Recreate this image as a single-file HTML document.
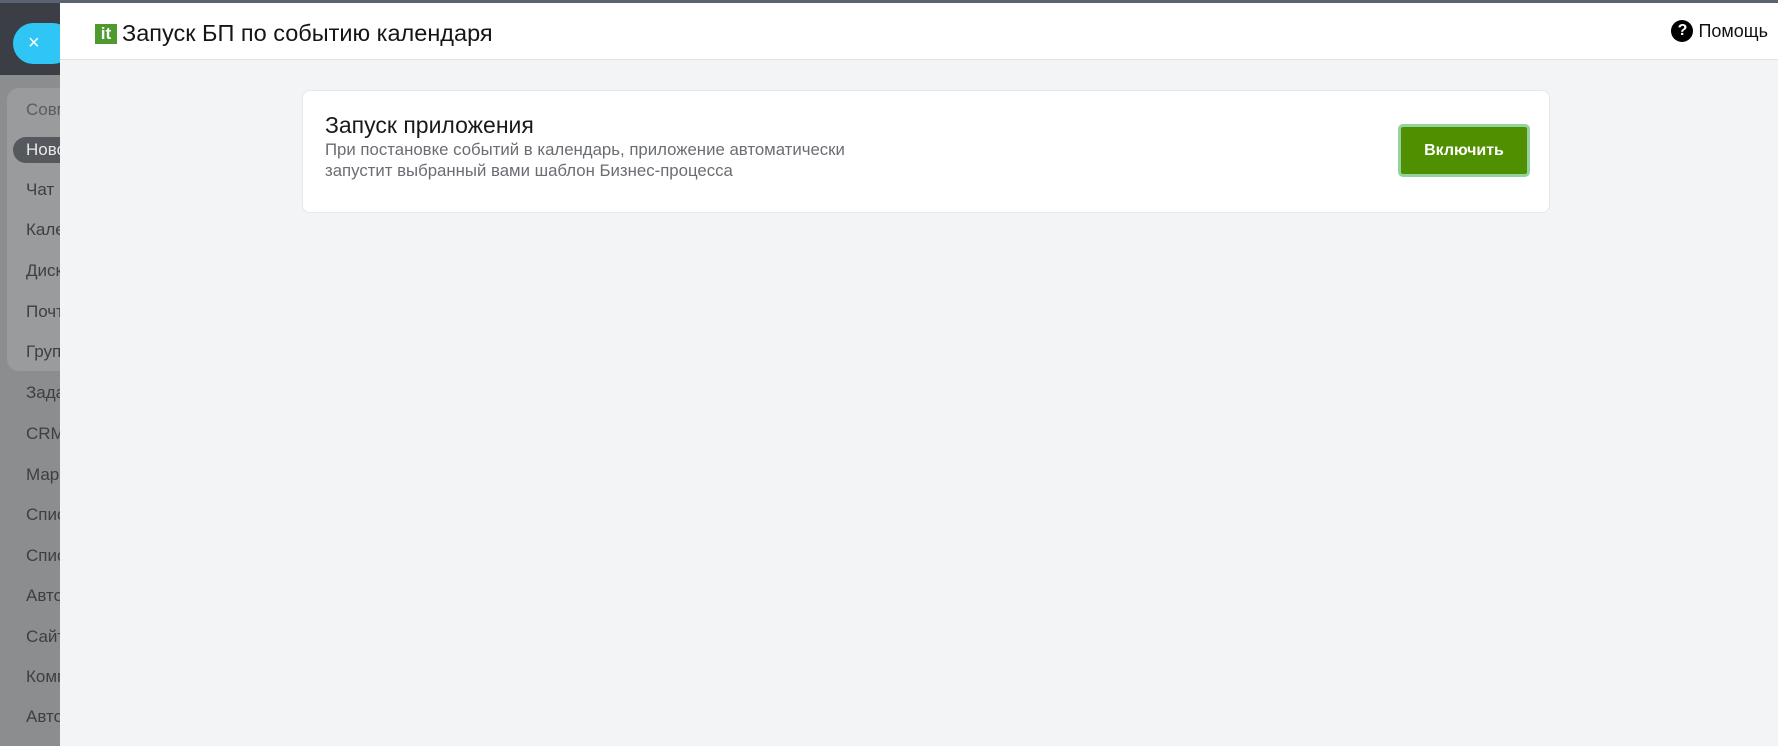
<!DOCTYPE html>
<html><head><meta charset="utf-8"><style>
*{margin:0;padding:0;box-sizing:border-box}
body{width:1778px;height:746px;overflow:hidden;background:#8b8d8f;font-family:"Liberation Sans","DejaVu Sans",sans-serif;position:relative}
.topbar{position:absolute;left:0;top:0;width:1778px;height:3px;background:#5c6370}
.lefthead{position:absolute;left:0;top:3px;width:60px;height:72px;background:#3b3f45}
.pill{position:absolute;left:13px;top:23px;width:60px;height:41px;border-radius:21px;background:#2fc6f6;color:#fff;font-size:20px;line-height:41px;padding-left:15px}
.grp{position:absolute;left:7px;top:88px;width:70px;height:283px;border-radius:12px;background:#999b9d}
.it{position:absolute;left:26px;font-size:17px;color:#3c3f44}
.act{position:absolute;left:13px;top:137px;width:70px;height:26px;border-radius:13px;background:#55585c}
.panel{position:absolute;left:60px;top:3px;width:1718px;height:743px;background:#f3f4f6}
.hdr{position:absolute;left:0;top:0;width:1718px;height:57px;background:#fff;border-bottom:1px solid #dfe1e4}
.logo{position:absolute;left:35px;top:21px;width:22px;height:20px;background:#4e9a2e;color:#fff;font-weight:bold;font-size:17px;line-height:19px;text-align:center}
.title{position:absolute;left:62px;top:17px;font-size:23.5px;color:#151515}
.help{position:absolute;right:10px;top:17px;font-size:18px;color:#111;display:flex;align-items:center}
.q{width:22px;height:22px;border-radius:50%;background:#000;color:#fff;font-weight:bold;font-size:16px;text-align:center;line-height:22px;margin-right:5px}
.card{position:absolute;left:242px;top:87px;width:1248px;height:123px;background:#fff;border:1px solid #e6e8ea;border-radius:8px}
.ct{position:absolute;left:22px;top:21px;font-size:23px;color:#1a1a1a}
.cd{position:absolute;left:22px;top:49px;font-size:16.8px;line-height:20.5px;color:#6a6d72}
.btn{position:absolute;left:1095px;top:33px;width:132px;height:53px;border-radius:5px;background:#4f8f00;border:3px solid #93d39d;color:#fff;font-weight:bold;font-size:16px;text-align:center;line-height:47px}
</style></head><body>
<div class="topbar"></div>
<div class="lefthead"></div>
<div class="pill">×</div>
<div class="grp"></div>
<div class="act"></div>
<div class="it" style="top:100px;color:#5a5d61">Совм</div>
<div class="it" style="top:140px;color:#e8e8e8">Ново</div>
<div class="it" style="top:180px">Чат и</div>
<div class="it" style="top:220px">Кале</div>
<div class="it" style="top:261px">Диск</div>
<div class="it" style="top:302px">Почт</div>
<div class="it" style="top:342px">Груп</div>
<div class="it" style="top:383px">Зада</div>
<div class="it" style="top:424px">CRM</div>
<div class="it" style="top:465px">Мар</div>
<div class="it" style="top:505px">Спис</div>
<div class="it" style="top:546px">Спис</div>
<div class="it" style="top:586px">Авто</div>
<div class="it" style="top:627px">Сайт</div>
<div class="it" style="top:667px">Комп</div>
<div class="it" style="top:707px">Авто</div>
<div class="panel">
<div class="hdr">
<div class="logo">it</div>
<div class="title">Запуск БП по событию календаря</div>
<div class="help"><div class="q">?</div>Помощь</div>
</div>
<div class="card">
<div class="ct">Запуск приложения</div>
<div class="cd">При постановке событий в календарь, приложение автоматически<br>запустит выбранный вами шаблон Бизнес-процесса</div>
<div class="btn">Включить</div>
</div>
</div>
</body></html>
